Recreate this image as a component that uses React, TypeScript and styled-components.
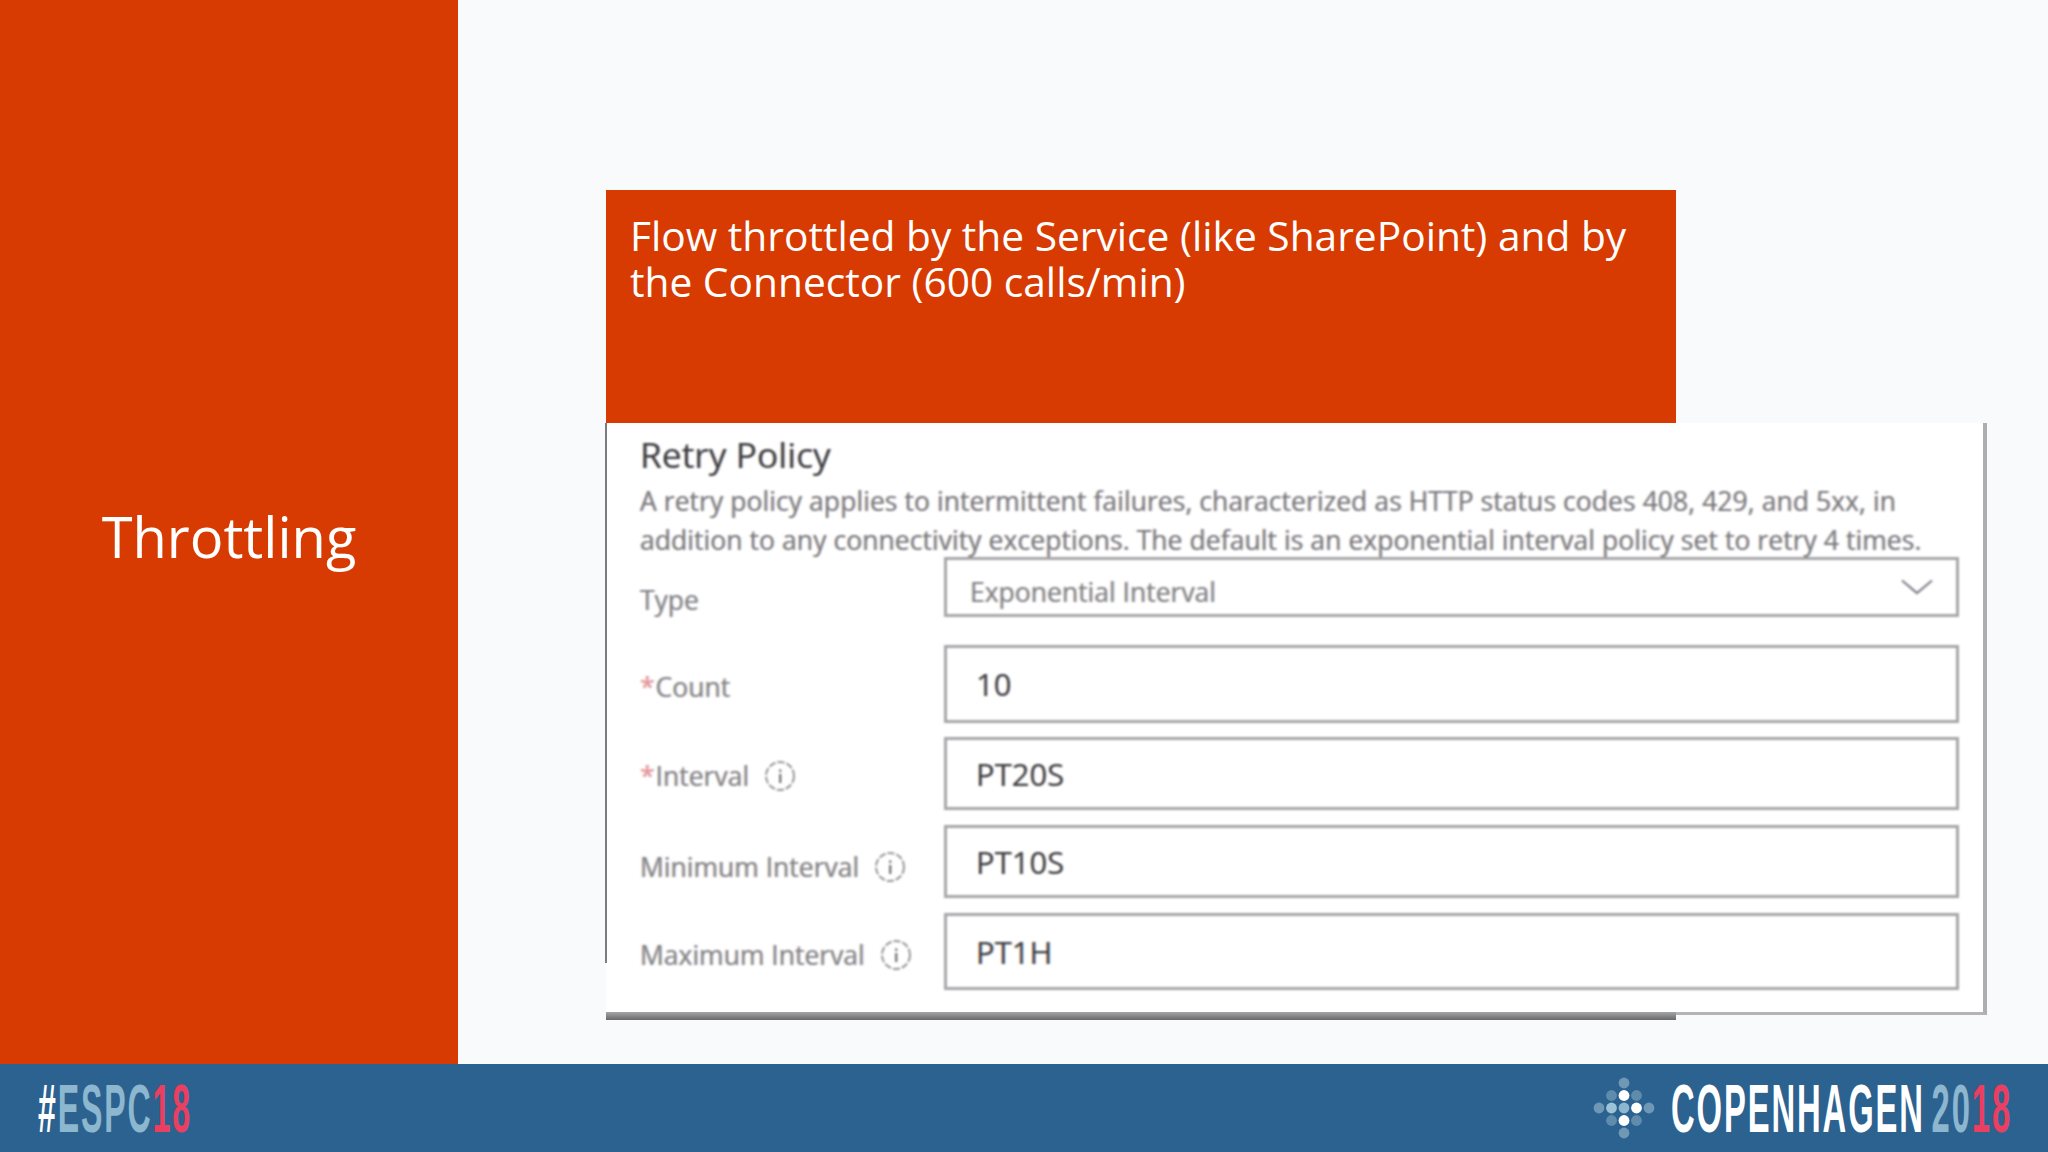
import styled, { createGlobalStyle } from 'styled-components';

const GlobalStyle = createGlobalStyle`
  html, body {
    margin: 0;
    padding: 0;
    background: #f9fafb;
  }
`;

const Slide = styled.div`
  width: 2048px;
  height: 1152px;
  display: flex;
  flex-direction: column;
  overflow: hidden;
  font-family: "Open Sans", "Noto Sans", sans-serif;
`;

const Main = styled.main`
  height: 1064px;
  display: flex;
`;

const Sidebar = styled.aside`
  width: 458px;
  display: flex;
  align-items: center;
  justify-content: center;
  background: #d83b01;
  color: #fff;
  font-size: 56px;
  padding-top: 8px;
  box-sizing: border-box;
`;

const Content = styled.section`
  flex: 1;
  padding: 190px 0 0 148px;
`;

const Banner = styled.div`
  width: 1070px;
  height: 233px;
  box-sizing: border-box;
  padding: 22px 0 0 24px;
  background: #d83b01;
  color: #fff;
  font-size: 40.7px;
  line-height: 46px;
`;

const BannerLine = styled.div`
  white-space: nowrap;
`;

const Panel = styled.div`
  position: relative;
  width: 1381px;
  height: 592px;
  box-sizing: border-box;
  padding: 8px 24px 0 34px;
  background: #fff;
  border-right: 4px solid #aeaeb0;
  border-bottom: 3px solid #b4b4b6;

  &::before {
    content: "";
    position: absolute;
    left: -1px;
    top: 0;
    width: 2px;
    height: 540px;
    background: #7d7d7f;
  }

  &::after {
    content: "";
    position: absolute;
    left: 0;
    bottom: -8px;
    width: 1070px;
    height: 8px;
    background: linear-gradient(#a5a5a7, #69696b);
  }
`;

const Blurred = styled.div`
  filter: blur(0.8px);
  text-shadow: 1.2px 0 0 rgba(90, 150, 230, 0.26), -1.2px 0 0 rgba(240, 170, 90, 0.32);
`;

const Title = styled.div`
  height: 51px;
  font-size: 35.4px;
  line-height: 46px;
  color: #3c3c40;
  white-space: nowrap;
`;

const Description = styled.div`
  font-size: 26.5px;
  line-height: 39px;
  letter-spacing: 0.06px;
  color: #77777d;
  white-space: nowrap;
`;

const Form = styled.div`
  margin-top: -3px;
  display: flex;
  flex-direction: column;
`;

const Row = styled.div<{ $top: number }>`
  display: grid;
  grid-template-columns: 304px 1fr;
  align-items: start;
  margin-top: ${(p) => p.$top}px;
`;

const Label = styled.div<{ $drop: number }>`
  display: flex;
  align-items: center;
  gap: 15px;
  padding-top: ${(p) => p.$drop}px;
  font-size: 26.5px;
  line-height: 34px;
  color: #808086;
  white-space: nowrap;
`;

const Required = styled.span`
  color: #ee8f95;
  margin-right: 1px;
`;

const Field = styled.div<{ $height: number }>`
  height: ${(p) => p.$height}px;
  box-sizing: border-box;
  display: flex;
  align-items: center;
  padding-left: 29px;
  border: 3px solid #a6a6a9;
  background: #fff;
  font-size: 31px;
  color: #3c3c42;
`;

const SelectField = styled(Field)`
  justify-content: space-between;
  padding: 10px 23px 0 23px;
  font-size: 26.5px;
  color: #808086;
`;

const ChevronSvg = styled.svg`
  margin-top: -10px;
`;

const InfoIcon = () => (
  <svg width="32" height="32" viewBox="0 0 32 32" fill="none">
    <circle cx="16" cy="16" r="14" stroke="#97979b" strokeWidth="2" strokeDasharray="7 2" />
    <rect x="15" y="14" width="2.4" height="9" fill="#77777d" />
    <rect x="15" y="9.5" width="2.4" height="2.4" fill="#77777d" />
  </svg>
);

const Chevron = () => (
  <ChevronSvg width="32" height="16" viewBox="0 0 32 16" fill="none">
    <path d="M1 1.5 L16 14 L31 1.5" stroke="#7f7f8c" strokeWidth="2.2" />
  </ChevronSvg>
);

const Footer = styled.footer`
  height: 88px;
  display: flex;
  align-items: center;
  justify-content: space-between;
  background: #2c628f;
  font-family: "Liberation Sans", Arial, sans-serif;
  font-size: 69px;
  font-weight: 700;
  letter-spacing: 4px;
  color: #fff;
`;

const Hashtag = styled.div`
  margin-left: 38px;
  white-space: nowrap;
  transform: scaleX(0.465);
  transform-origin: left center;
`;

const Brand = styled.div`
  display: flex;
  align-items: center;
  gap: 17px;
  margin-right: 36px;
`;

const City = styled.div`
  white-space: nowrap;
  width: 340px;
  display: flex;
  justify-content: flex-end;
`;

const CityText = styled.span`
  transform: scaleX(0.475);
  transform-origin: right center;
`;

const Pale = styled.span`
  color: #8db6cf;
`;

const Year = styled(Pale)`
  margin-left: 14px;
`;

const Pink = styled.span`
  color: #ea3f60;
`;

const dots: [number, number, string][] = [
  [0, -2, '#6f98b5'],
  [-1, -1, '#5f8cac'],
  [0, -1, '#ffffff'],
  [1, -1, '#5f8cac'],
  [-2, 0, '#6f98b5'],
  [-1, 0, '#9cc3d6'],
  [0, 0, '#8db6cf'],
  [1, 0, '#ffffff'],
  [2, 0, '#6f98b5'],
  [-1, 1, '#5f8cac'],
  [0, 1, '#ffffff'],
  [1, 1, '#5f8cac'],
  [0, 2, '#6f98b5'],
];

const Logo = () => (
  <svg width="62" height="62" viewBox="-31 -31 62 62">
    {dots.map(([x, y, c]) => (
      <circle key={`${x}:${y}`} cx={x * 12.5} cy={y * 12.5} r="5.4" fill={c} />
    ))}
  </svg>
);

const rows = [
  { label: 'Count', required: true, value: '10', top: 28, height: 78, drop: 25, info: false },
  { label: 'Interval', required: true, value: 'PT20S', top: 14, height: 73, drop: 22, info: true },
  { label: 'Minimum Interval', required: false, value: 'PT10S', top: 15, height: 73, drop: 25, info: true },
  { label: 'Maximum Interval', required: false, value: 'PT1H', top: 15, height: 77, drop: 25, info: true },
];

export default function App() {
  return (
    <Slide>
      <GlobalStyle />
      <Main>
        <Sidebar>Throttling</Sidebar>
        <Content>
          <Banner>
            <BannerLine>Flow throttled by the Service (like SharePoint) and by</BannerLine>
            <BannerLine>the Connector (600 calls/min)</BannerLine>
          </Banner>
          <Panel>
            <Blurred>
              <Title>Retry Policy</Title>
              <Description>
                A retry policy applies to intermittent failures, characterized as HTTP status codes 408, 429, and 5xx, in
                <br />
                addition to any connectivity exceptions. The default is an exponential interval policy set to retry 4 times.
              </Description>
              <Form>
                <Row $top={0}>
                  <Label $drop={26}>Type</Label>
                  <SelectField $height={60}>
                    Exponential Interval
                    <Chevron />
                  </SelectField>
                </Row>
                {rows.map((r) => (
                  <Row key={r.label} $top={r.top}>
                    <Label $drop={r.drop}>
                      <span>
                        {r.required && <Required>*</Required>}
                        {r.label}
                      </span>
                      {r.info && <InfoIcon />}
                    </Label>
                    <Field $height={r.height}>{r.value}</Field>
                  </Row>
                ))}
              </Form>
            </Blurred>
          </Panel>
        </Content>
      </Main>
      <Footer>
        <Hashtag>
          #<Pale>ESPC</Pale>
          <Pink>18</Pink>
        </Hashtag>
        <Brand>
          <Logo />
          <City>
            <CityText>
              COPENHAGEN<Year>20</Year>
              <Pink>18</Pink>
            </CityText>
          </City>
        </Brand>
      </Footer>
    </Slide>
  );
}
